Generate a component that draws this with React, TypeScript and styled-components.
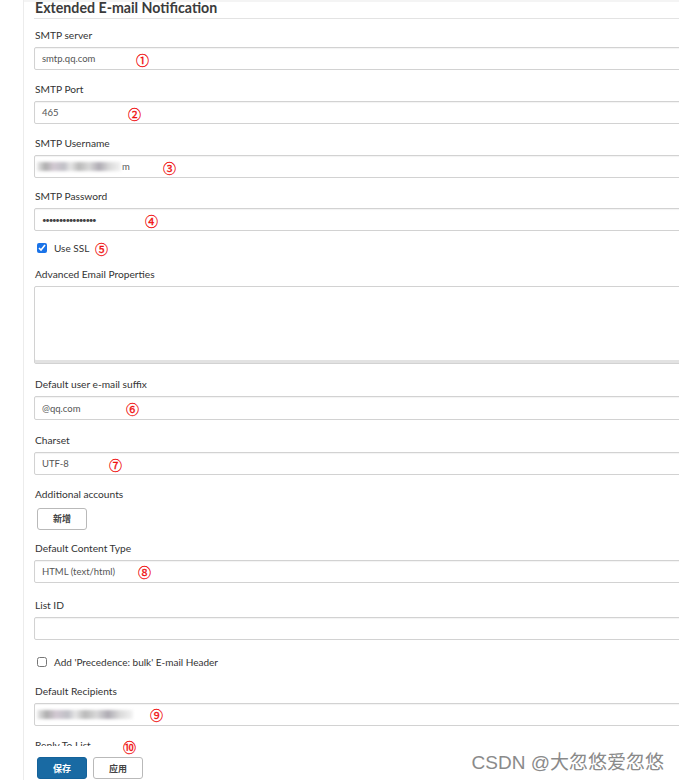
import styled, { createGlobalStyle } from 'styled-components'

const GlobalStyle = createGlobalStyle`
  html, body {
    margin: 0;
    padding: 0;
    background: #fff;
  }
  body {
    font-family: Lato, "Noto Sans", "Noto Sans CJK SC", sans-serif;
    color: #333;
  }
`

const Page = styled.div`
  position: relative;
  width: 679px;
  height: 780px;
  overflow: hidden;
  display: flex;
  background: #fff;
`

const Gutter = styled.div`
  width: 23px;
  flex-shrink: 0;
  border-right: 1px solid #ececec;
`

const Main = styled.div`
  flex: 1;
  padding-left: 10px;
  border-top: 2px solid #f4f4f4;
  overflow: hidden;
`

const Title = styled.h2`
  margin: -2px 0 9px;
  height: 18px;
  line-height: 16px;
  font-size: 14.2px;
  font-weight: 700;
  color: #3b3b3b;
  padding-left: 1px;
  border-bottom: 1px solid #e3e3e3;
  width: 700px;
`

const Group = styled.div<{ $after?: number }>`
  margin-bottom: ${(p) => p.$after ?? 12}px;
`

const Label = styled.div`
  height: 14px;
  line-height: 14px;
  font-size: 10.2px;
  color: #333;
  margin-bottom: 5px;
  padding-left: 1px;
  white-space: nowrap;
`

const Field = styled.div`
  position: relative;
  box-sizing: border-box;
  width: 700px;
  height: 23px;
  border: 1px solid #d2d2d2;
  border-radius: 2px;
  box-shadow: inset 0 1px 1px rgba(0, 0, 0, 0.05);
  padding-left: 7px;
  display: flex;
  align-items: center;
  font-size: 9.5px;
  color: #555;
  white-space: nowrap;
`

const TextArea = styled(Field)`
  height: 78px;
  box-shadow: inset 0 -3px 0 #e2e2e2;
`

const Dots = styled.span`
  font-size: 8px;
  letter-spacing: -1.3px;
  color: #444;
`

const Blurred = styled.span<{ $w: number }>`
  display: inline-block;
  width: ${(p) => p.$w}px;
  height: 9px;
  filter: blur(1.5px);
  background: linear-gradient(
    90deg,
    #e4e4e4 0%,
    #9a9a9a 10%,
    #c8bcc8 20%,
    #b0b0b8 32%,
    #e0e0e0 40%,
    #a8a8a8 50%,
    #cfcfcf 62%,
    #9a96a0 74%,
    #d0d0d0 86%,
    #f0f0f0 100%
  );
  opacity: 0.8;
`

const Mark = styled.span<{ $left: number }>`
  position: absolute;
  left: ${(p) => p.$left}px;
  top: 50%;
  transform: translateY(-50%);
  font-family: "Noto Sans CJK SC", sans-serif;
  font-size: 13px;
  line-height: 13px;
  color: #f01010;
  -webkit-text-stroke: 0.3px #f01010;
`

const CheckRow = styled.label<{ $after?: number }>`
  position: relative;
  display: flex;
  align-items: center;
  height: 14px;
  padding-left: 3px;
  font-size: 10px;
  color: #333;
  margin-bottom: ${(p) => p.$after ?? 12}px;
`

const Check = styled.input`
  width: 10px;
  height: 10px;
  margin: 0 7px 0 0;
  accent-color: #1a73e8;
`

const Button = styled.button<{ $primary?: boolean }>`
  box-sizing: border-box;
  width: 50px;
  height: 22px;
  margin-left: 3px;
  border-radius: 3px;
  border: 1px solid ${(p) => (p.$primary ? '#14629a' : '#b9b9b9')};
  background: ${(p) => (p.$primary ? '#196aa3' : '#fff')};
  color: ${(p) => (p.$primary ? '#fff' : '#444')};
  font-family: "Noto Sans CJK SC", sans-serif;
  font-size: 9px;
  font-weight: 700;
  padding: 0;
`

const CutLabel = styled.div`
  position: relative;
  height: 14px;
  line-height: 14px;
  font-size: 10.2px;
  color: #333;
  padding-left: 1px;
`

const Footer = styled.div`
  position: absolute;
  left: 24px;
  right: 0;
  top: 746px;
  height: 34px;
  background: #fff;
  display: flex;
  gap: 3px;
  padding: 11px 0 0 10px;
`

const Watermark = styled.div`
  position: absolute;
  right: 15px;
  top: 747px;
  font-family: "Liberation Sans", "Noto Sans CJK SC", sans-serif;
  font-size: 19px;
  color: #8a8a8a;
  text-shadow: 0 0 1px #fff;
`

const TenMark = styled.span`
  position: absolute;
  left: 89px;
  top: 2px;
  z-index: 2;
  font-family: "Noto Sans CJK SC", sans-serif;
  font-size: 13px;
  line-height: 13px;
  color: #f01010;
  -webkit-text-stroke: 0.3px #f01010;
`

const App = () => {
  return (
    <Page>
      <GlobalStyle />
      <Gutter />
      <Main>
        <Title>Extended E-mail Notification</Title>

        <Group>
          <Label>SMTP server</Label>
          <Field>
            smtp.qq.com
            <Mark $left={101}>①</Mark>
          </Field>
        </Group>

        <Group>
          <Label>SMTP Port</Label>
          <Field>
            465
            <Mark $left={93}>②</Mark>
          </Field>
        </Group>

        <Group $after={11}>
          <Label>SMTP Username</Label>
          <Field style={{ paddingLeft: 2 }}>
            <Blurred $w={84} />
            <span style={{ marginLeft: 1 }}>m</span>
            <Mark $left={128}>③</Mark>
          </Field>
        </Group>

        <Group $after={10}>
          <Label>SMTP Password</Label>
          <Field>
            <Dots>••••••••••••••••</Dots>
            <Mark $left={110}>④</Mark>
          </Field>
        </Group>

        <CheckRow>
          <Check type="checkbox" defaultChecked />
          Use SSL
          <Mark $left={61}>⑤</Mark>
        </CheckRow>

        <Group $after={13}>
          <Label>Advanced Email Properties</Label>
          <TextArea />
        </Group>

        <Group $after={13}>
          <Label>Default user e-mail suffix</Label>
          <Field style={{ height: 24 }}>
            @qq.com
            <Mark $left={91}>⑥</Mark>
          </Field>
        </Group>

        <Group>
          <Label>Charset</Label>
          <Field>
            UTF-8
            <Mark $left={74}>⑦</Mark>
          </Field>
        </Group>

        <Group $after={11}>
          <Label>Additional accounts</Label>
          <Button>新增</Button>
        </Group>

        <Group $after={15}>
          <Label>Default Content Type</Label>
          <Field>
            HTML (text/html)
            <Mark $left={103}>⑧</Mark>
          </Field>
        </Group>

        <Group $after={15}>
          <Label>List ID</Label>
          <Field />
        </Group>

        <CheckRow $after={15}>
          <Check type="checkbox" />
          Add 'Precedence: bulk' E-mail Header
        </CheckRow>

        <Group>
          <Label>Default Recipients</Label>
          <Field style={{ paddingLeft: 2 }}>
            <Blurred $w={96} />
            <Mark $left={115}>⑨</Mark>
          </Field>
        </Group>

        <CutLabel>
          Reply To List
          <TenMark>⑩</TenMark>
        </CutLabel>
      </Main>

      <Footer>
        <Button $primary>保存</Button>
        <Button>应用</Button>
      </Footer>
      <Watermark>CSDN @大忽悠爱忽悠</Watermark>
    </Page>
  )
}

export default App
